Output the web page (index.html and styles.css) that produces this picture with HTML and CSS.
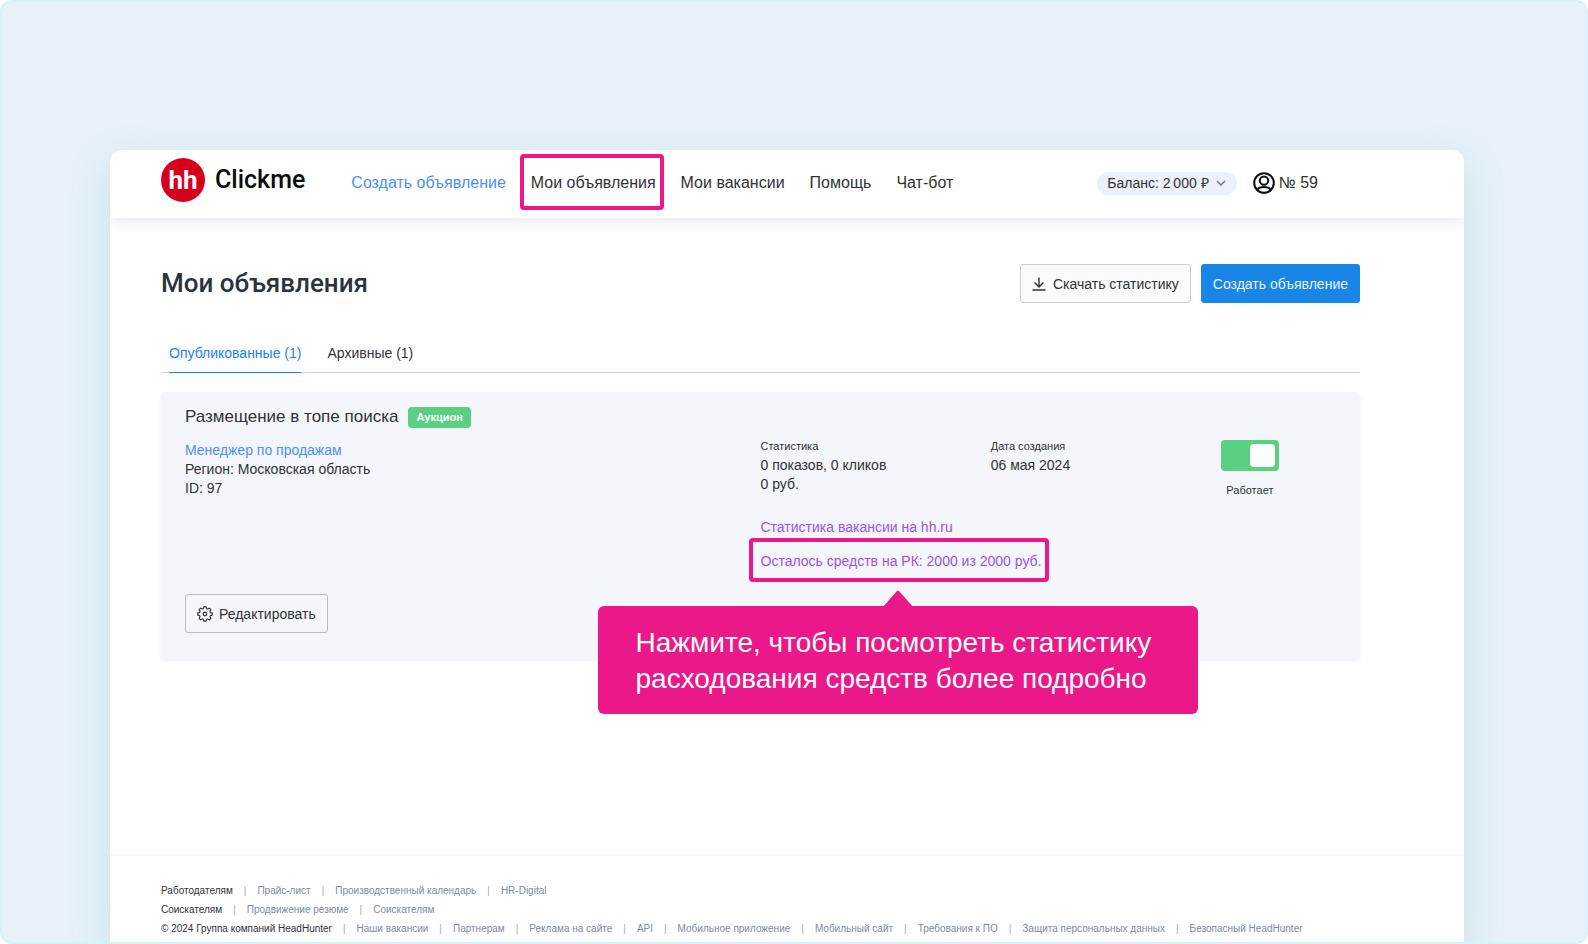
FILE: index.html
```html
<!DOCTYPE html>
<html lang="ru">
<head>
<meta charset="utf-8">
<meta name="viewport" content="width=device-width, initial-scale=1">
<title>Clickme — Мои объявления</title>
<link rel="stylesheet" href="styles.css">
</head>
<body>
<div class="frame">
  <div class="window">
    <header class="header">
      <a class="logo" href="#"><span class="logo-mark">hh</span><span class="logo-name">Clickme</span></a>
      <nav class="nav">
        <a class="nav-link nav-link-accent" href="#">Создать объявление</a>
        <a class="nav-link nav-link-marked" href="#">Мои объявления</a>
        <a class="nav-link" href="#">Мои вакансии</a>
        <a class="nav-link" href="#">Помощь</a>
        <a class="nav-link" href="#">Чат-бот</a>
      </nav>
      <div class="account">
        <button class="balance" type="button">Баланс: 2&thinsp;000 ₽
          <svg class="chevron" viewBox="0 0 10 6" aria-hidden="true"><path d="M1 1l4 4 4-4"/></svg>
        </button>
        <a class="user" href="#">
          <svg class="user-icon" viewBox="0 0 22 22" aria-hidden="true"><circle cx="11" cy="11" r="9.8"/><circle cx="11" cy="8.6" r="4.2"/><path d="M4 17.6c1.6-1.900 4-2.600 7-2.600s5.400.7 7 2.600"/></svg>
          <span>№ 59</span>
        </a>
      </div>
    </header>

    <main class="content">
      <div class="title-row">
        <h1 class="title">Мои объявления</h1>
        <div class="actions">
          <button class="button" type="button">
            <svg class="button-icon" viewBox="0 0 14 14" aria-hidden="true"><path d="M7 .5v9.200M2.600 5.600L7 10l4.400-4.400M.5 13h13"/></svg>
            Скачать статистику
          </button>
          <button class="button button-primary" type="button">Создать объявление</button>
        </div>
      </div>

      <div class="tabs">
        <a class="tab tab-active" href="#">Опубликованные (1)</a>
        <a class="tab" href="#">Архивные (1)</a>
      </div>

      <article class="card">
        <div class="card-title-row">
          <h2 class="card-title">Размещение в топе поиска</h2>
          <span class="badge">Аукцион</span>
        </div>
        <div class="card-grid">
          <div class="card-info">
            <a class="link" href="#">Менеджер по продажам</a>
            <span>Регион: Московская область</span>
            <span>ID: 97</span>
          </div>
          <div class="card-stats">
            <span class="caption">Статистика</span>
            <span>0 показов, 0 кликов</span>
            <span>0 руб.</span>
            <a class="link-violet" href="#">Статистика вакансии на hh.ru</a>
            <div class="funds">
              <a class="link-violet" href="#">Осталось средств на РК: 2000 из 2000 руб.</a>
              <div class="tooltip" role="tooltip">
                <svg class="tooltip-arrow" viewBox="0 0 32 18" aria-hidden="true"><path d="M0 18L15 1q1-1 2 0L32 18z"/></svg>
                Нажмите, чтобы посмотреть статистику расходования средств более подробно
              </div>
            </div>
          </div>
          <div class="card-date">
            <span class="caption">Дата создания</span>
            <span>06 мая 2024</span>
          </div>
          <div class="card-state">
            <input class="switch" type="checkbox" role="switch" id="state" checked>
            <label class="state-label" for="state">Работает</label>
          </div>
        </div>
        <button class="button button-clear" type="button">
          <svg class="button-icon gear" viewBox="0 0 16 16" aria-hidden="true"><path d="M15.200 6.900V9.100Q11.600 9.500 13.900 12.300L12.300 13.900Q9.500 11.600 9.100 15.200H6.900Q6.500 11.600 3.700 13.900L2.100 12.300Q4.400 9.500.8 9.100V6.900Q4.400 6.500 2.100 3.700L3.700 2.100Q6.500 4.400 6.900.8H9.100Q9.500 4.400 12.300 2.100L13.900 3.700Q11.600 6.500 15.200 6.900z"/><circle cx="8" cy="8" r="1.800"/></svg>
          Редактировать
        </button>
      </article>
    </main>

    <footer class="footer">
      <ul class="footer-row">
        <li><a class="footer-main" href="#">Работодателям</a></li><li><a href="#">Прайс-лист</a></li><li><a href="#">Производственный календарь</a></li><li><a href="#">HR-Digital</a></li>
      </ul>
      <ul class="footer-row">
        <li><a class="footer-main" href="#">Соискателям</a></li><li><a href="#">Продвижение резюме</a></li><li><a href="#">Соискателям</a></li>
      </ul>
      <ul class="footer-row">
        <li><span class="footer-main">© 2024 Группа компаний HeadHunter</span></li><li><a href="#">Наши вакансии</a></li><li><a href="#">Партнерам</a></li><li><a href="#">Реклама на сайте</a></li><li><a href="#">API</a></li><li><a href="#">Мобильное приложение</a></li><li><a href="#">Мобильный сайт</a></li><li><a href="#">Требования к ПО</a></li><li><a href="#">Защита персональных данных</a></li><li><a href="#">Безопасный HeadHunter</a></li>
      </ul>
    </footer>
  </div>
</div>
</body>
</html>
```
FILE: styles.css
```css
* {
  box-sizing: border-box;
}

body {
  margin: 0;
  background: #fff;
  color: #303233;
  font: 14px/19px "Liberation Sans", Arial, sans-serif;
}

a {
  color: inherit;
  text-decoration: none;
}

.frame {
  display: flex;
  min-height: 100vh;
  padding: 148px 122px 0 108px;
  overflow: hidden;
  background: #e6f2f8;
  border: 2px solid #daf1f9;
  border-radius: 12px;
}

.window {
  display: flex;
  flex: 1;
  flex-direction: column;
  min-width: 0;
  background: #fff;
  border-radius: 12px 12px 0 0;
  box-shadow: 0 14px 40px rgba(90, 160, 190, 0.22);
}

.header {
  display: flex;
  align-items: center;
  height: 68px;
  padding: 0 146px 0 51px;
  box-shadow: 0 2px 14px rgba(60, 80, 120, 0.14);
  clip-path: inset(0 0 -24px 0);
}

.logo {
  display: flex;
  align-items: center;
  gap: 10px;
  margin-right: 46px;
  padding-bottom: 8px;
  color: #0c0c0c;
}

.logo-mark {
  width: 44px;
  height: 44px;
  background: #d6001c;
  border-radius: 50%;
  color: #fff;
  font: 700 26px/44px "Roboto", sans-serif;
  text-align: center;
}

.logo-name {
  font: 500 25px/44px "Roboto", sans-serif;
}

.nav {
  display: flex;
  gap: 25px;
  font-size: 16px;
  line-height: 20px;
  padding-bottom: 2px;
}

.nav-link {
  position: relative;
  white-space: nowrap;
}

.nav-link-accent {
  color: #4b8ff9;
}

.nav-link-marked::after {
  position: absolute;
  inset: -19px -8px -17px -11px;
  border: 4px solid #ea1889;
  border-radius: 4px;
  content: "";
}

.account {
  display: flex;
  align-items: center;
  gap: 16px;
  margin-left: auto;
  padding-bottom: 2px;
}

.balance {
  display: flex;
  align-items: center;
  gap: 7px;
  height: 23px;
  padding: 0 11px 0 10px;
  background: #ecf0fa;
  border: 0;
  border-radius: 12px;
  color: inherit;
  font: inherit;
  white-space: nowrap;
}

.chevron {
  width: 10px;
  height: 6px;
  fill: none;
  stroke: #6d7a85;
  stroke-width: 1.5;
}

.user {
  display: flex;
  align-items: center;
  gap: 4px;
  font-size: 16px;
  line-height: 20px;
  white-space: nowrap;
}

.user-icon {
  width: 22px;
  height: 22px;
  fill: none;
  stroke: #0c0c0c;
  stroke-width: 2;
}

.content {
  flex: 1;
  padding: 46px 104px 48px 51px;
}

.title-row {
  display: flex;
  align-items: center;
  justify-content: space-between;
}

.title {
  margin: 0;
  color: #2b343c;
  font: 500 26px/39px "Roboto", sans-serif;
}

.actions {
  display: flex;
  gap: 10px;
}

.button {
  display: flex;
  align-items: center;
  gap: 7px;
  height: 39px;
  padding: 1px 11px 0;
  background: #fafafa;
  border: 1px solid #c9cbcd;
  border-radius: 3px;
  color: inherit;
  font: inherit;
  white-space: nowrap;
}

.button-primary {
  background: #1985e7;
  border-color: #1985e7;
  color: #e8f4ff;
}

.button-clear {
  gap: 6px;
  background: transparent;
  border-color: #b9bcc2;
}

.button-icon {
  width: 14px;
  height: 14px;
  fill: none;
  stroke: #303233;
  stroke-linejoin: round;
  stroke-width: 1.4;
}

.gear {
  width: 16px;
  height: 16px;
  stroke-width: 1.2;
}

.tabs {
  display: flex;
  gap: 26px;
  margin-top: 41px;
  padding-left: 8px;
  border-bottom: 1px solid #ccd5e2;
}

.tab {
  margin-bottom: -1px;
  padding-bottom: 9px;
  border-bottom: 1px solid transparent;
}

.tab-active {
  border-color: #1c80ff;
  color: #1c80ff;
}

.card {
  margin-top: 19px;
  padding: 14px 24px 26px;
  background: #f4f6fc;
  border-radius: 4px;
  box-shadow: 0 2px 3px rgba(40, 60, 100, 0.08);
}

.card-title-row {
  display: flex;
  align-items: center;
  gap: 10px;
}

.card-title {
  margin: 0;
  font-size: 17px;
  font-weight: 400;
  line-height: 22px;
}

.badge {
  padding: 0 8px;
  background: #5bcf82;
  border-radius: 4px;
  color: #fff;
  font-size: 11px;
  font-weight: 700;
  line-height: 21px;
}

.card-grid {
  display: grid;
  grid-template-columns: minmax(0, 5fr) minmax(0, 2fr) minmax(0, 2fr) minmax(0, 1fr);
  min-height: 154px;
  margin-bottom: 12px;
  padding-top: 9px;
}

.card-info,
.card-stats,
.card-date {
  display: flex;
  flex-direction: column;
  align-items: flex-start;
  white-space: nowrap;
}

.card-info {
  padding-top: 4px;
}

.link {
  color: #4b8ff9;
}

.link-violet {
  color: #9a52ea;
}

.card-stats > .link-violet {
  margin: 24px 0 15px;
}

.caption {
  font-size: 11px;
}

.funds {
  position: relative;
}

.funds::after {
  position: absolute;
  inset: -14px -8px -11px -12px;
  border: 4px solid #ea1889;
  border-radius: 4px;
  content: "";
  pointer-events: none;
}

.tooltip {
  position: absolute;
  top: 54px;
  left: -163px;
  width: 600px;
  padding: 19px 38px 17px;
  background: #ea1889;
  border-radius: 6px;
  color: #fff;
  font-size: 28px;
  line-height: 36px;
  white-space: normal;
}

.tooltip-arrow {
  position: absolute;
  top: -16px;
  left: 284px;
  width: 32px;
  height: 18px;
  fill: #ea1889;
}

.card-state {
  display: flex;
  flex-direction: column;
  align-items: center;
  gap: 10px;
  justify-self: start;
  padding-top: 3px;
}

.switch {
  display: flex;
  justify-content: flex-end;
  width: 58px;
  height: 31px;
  margin: 0;
  padding: 4px;
  appearance: none;
  background: #5bcf82;
  border-radius: 4px;
}

.switch::before {
  width: 25px;
  background: #fff;
  border-radius: 4px;
  content: "";
}

.state-label {
  font-size: 11px;
}

.footer {
  padding: 25px 51px 4px;
  border-top: 2px solid #f6f7fc;
  color: #7c8b9b;
  font-size: 10px;
}

.footer-row {
  display: flex;
  margin: 0;
  padding: 0;
  list-style: none;
  white-space: nowrap;
}

.footer-row li + li::before {
  margin: 0 11px;
  color: #a9a9a9;
  content: "|";
}

.footer-main {
  color: #303233;
}
```
